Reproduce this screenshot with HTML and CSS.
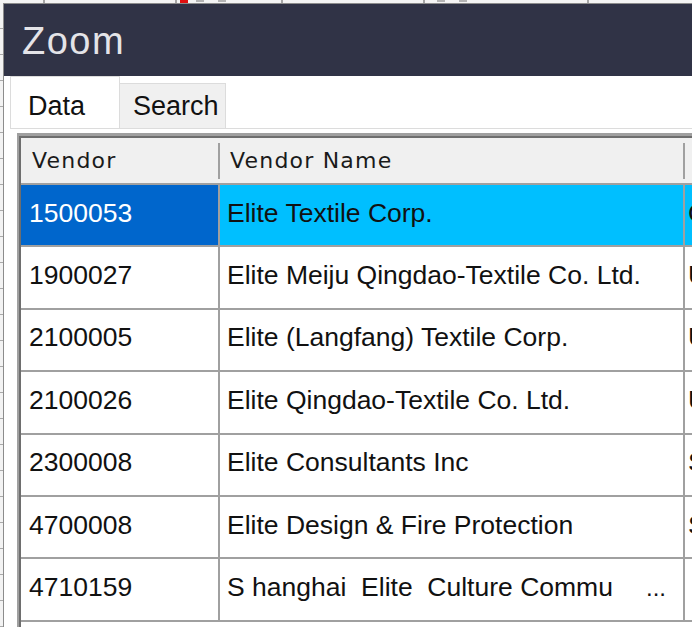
FILE: index.html
```html
<!DOCTYPE html>
<html>
<head>
<meta charset="utf-8">
<title>Zoom</title>
<link rel="stylesheet" href="styles.css">
</head>
<body>
<div class="top-strip">
  <span class="mark m1"></span>
  <span class="mark m2"></span>
  <span class="mark red"></span>
  <span class="mark dot m3"></span>
  <span class="mark dot m4"></span>
  <span class="mark m5"></span>
  <span class="mark m6"></span>
  <span class="mark dot m7"></span>
  <span class="mark dot m8"></span>
  <span class="mark m9"></span>
</div>
<div class="main">
  <div class="side"></div>
  <div class="window">
    <div class="titlebar">Zoom</div>
    <div class="client">
      <div class="tabs">
        <div class="tab active">Data</div>
        <div class="tab inactive">Search</div>
      </div>
      <div class="panel">
        <div class="grid">
          <div class="grid-inner">
            <div class="row head">
              <div class="cell c1">Vendor</div>
              <div class="cell c2">Vendor Name</div>
              <div class="cell c3"></div>
            </div>
            <div class="row selected">
              <div class="cell c1">1500053</div>
              <div class="cell c2">Elite Textile Corp.</div>
              <div class="cell c3">CN</div>
            </div>
            <div class="row">
              <div class="cell c1">1900027</div>
              <div class="cell c2">Elite Meiju Qingdao-Textile Co. Ltd.</div>
              <div class="cell c3">US</div>
            </div>
            <div class="row">
              <div class="cell c1">2100005</div>
              <div class="cell c2">Elite (Langfang) Textile Corp.</div>
              <div class="cell c3">US</div>
            </div>
            <div class="row">
              <div class="cell c1">2100026</div>
              <div class="cell c2">Elite Qingdao-Textile Co. Ltd.</div>
              <div class="cell c3">US</div>
            </div>
            <div class="row">
              <div class="cell c1">2300008</div>
              <div class="cell c2">Elite Consultants Inc</div>
              <div class="cell c3">SG</div>
            </div>
            <div class="row">
              <div class="cell c1">4700008</div>
              <div class="cell c2">Elite Design &amp; Fire Protection</div>
              <div class="cell c3">SG</div>
            </div>
            <div class="row">
              <div class="cell c1">4710159</div>
              <div class="cell c2 split"><span class="pre">S hanghai  Elite  Culture Commu</span><span class="ellipsis">...</span></div>
              <div class="cell c3"></div>
            </div>
          </div>
        </div>
      </div>
    </div>
  </div>
</div>
</body>
</html>
```

FILE: styles.css
```css
html, body {
  margin: 0;
  padding: 0;
}

body {
  width: 692px;
  height: 627px;
  overflow: hidden;
  background: #f3f3f3;
  font-family: "Liberation Sans", Arial, sans-serif;
  color: #111;
}

.top-strip {
  height: 3px;
  display: flex;
  background: #f4f4f4;
}

.mark {
  height: 3px;
  width: 2px;
  flex-shrink: 0;
  background: #a6a6a6;
}
.mark.dot { width: 8px; height: 2px; background: #b4b4b4; }
.m1 { margin-left: 43px; }
.m2 { margin-left: 130px; }
.mark.red { width: 8px; margin-left: 3px; background: #e01010; }
.m3 { margin-left: 8px; }
.m4 { margin-left: 14px; }
.m5 { margin-left: 55px; }
.m6 { margin-left: 140px; }
.m7 { margin-left: 12px; }
.m8 { margin-left: 14px; }
.m9 { margin-left: 120px; }

.main {
  display: flex;
  height: 624px;
  width: 692px;
}

.side {
  width: 3px;
  flex-shrink: 0;
  background: repeating-linear-gradient(to bottom, #f3f3f3 0 25px, #a9a9a9 25px 26px);
}

.window {
  flex: 1;
  min-width: 0;
  display: flex;
  flex-direction: column;
  border-left: 1px solid #8c8c8c;
  border-top: 1px solid #8c8c8c;
}

.titlebar {
  height: 72px;
  flex-shrink: 0;
  background: #303346;
  color: #e4e4e8;
  font-size: 38px;
  line-height: 74px;
  padding-left: 18px;
  letter-spacing: 1.5px;
}

.client {
  flex: 1;
  min-height: 0;
  background: #fff;
  padding-left: 6px;
  display: flex;
  flex-direction: column;
}

.tabs {
  display: flex;
  align-items: flex-end;
  height: 52px;
  flex-shrink: 0;
}

.tab {
  box-sizing: border-box;
  display: flex;
  align-items: center;
  font-size: 27px;
  color: #111;
  border: 1px solid #dcdcdc;
  border-bottom: none;
}

.tab.active {
  width: 110px;
  height: 52px;
  background: #fff;
  padding-left: 17px;
  padding-top: 7px;
}

.tab.inactive {
  width: 106px;
  height: 45px;
  background: #f0f0f0;
  border-left: none;
  padding-left: 13px;
  padding-top: 1px;
}

.panel {
  flex: 1;
  min-height: 0;
  border-top: 1px solid #dcdcdc;
  padding: 4px 0 0 7px;
}

.grid {
  border-left: 2px solid #a0a0a0;
  border-top: 3px solid #a0a0a0;
  height: 100%;
  box-sizing: border-box;
}

.grid-inner {
  border-left: 2px solid #6e6e6e;
  border-top: 2px solid #6e6e6e;
  height: 100%;
  box-sizing: border-box;
}

.row {
  display: flex;
  height: 62.4px;
  box-sizing: border-box;
  border-bottom: 2px solid #a0a0a0;
}

.cell {
  box-sizing: border-box;
  display: flex;
  align-items: center;
  flex-shrink: 0;
  white-space: nowrap;
  overflow: hidden;
  font-size: 26.5px;
  padding-bottom: 4px;
}

.c1 {
  width: 199px;
  padding-left: 8px;
  border-right: 2px solid #a0a0a0;
}

.c2 {
  width: 465px;
  padding-left: 7px;
  border-right: 2px solid #a0a0a0;
}

.c3 {
  flex: 1;
  flex-shrink: 1;
  min-width: 0;
  padding-left: 3px;
}

.row.head {
  height: 47px;
  background: #f0f0f0;
}

.head .cell {
  font-family: "DejaVu Sans", sans-serif;
  font-size: 22px;
  letter-spacing: 1.2px;
  color: #1a1a1a;
  padding-bottom: 0;
  border-right: none;
}

.head .c1 {
  padding-left: 11px;
  background: linear-gradient(#a0a0a0, #a0a0a0) no-repeat right 0 center / 2px 36px;
}

.head .c2 {
  padding-left: 10px;
  background: linear-gradient(#a0a0a0, #a0a0a0) no-repeat right 0 center / 2px 36px;
}

.selected .c1 {
  background: #0066cc;
  color: #fff;
}

.selected .c2,
.selected .c3 {
  background: #00bfff;
}

.split {
  justify-content: space-between;
  padding-right: 17px;
}

.pre {
  white-space: pre;
}

.ellipsis {
  font-size: 24px;
}
```
